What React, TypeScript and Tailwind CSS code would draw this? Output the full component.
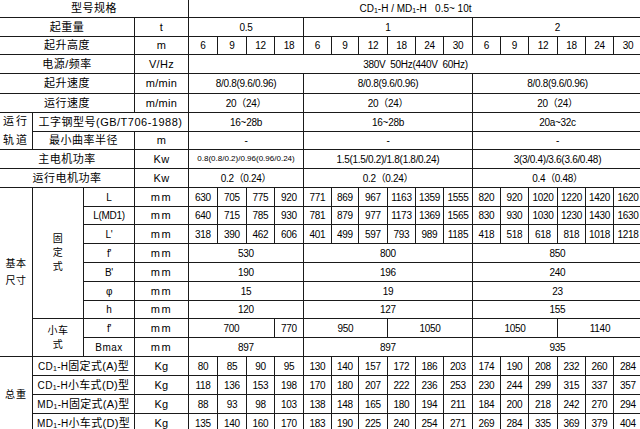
import React from "react";

type P = { className?: string; children?: React.ReactNode };

function Cell({ className = "", children }: P) {
  return (
    <div className={`flex items-center justify-center overflow-hidden whitespace-nowrap bg-white text-black ${className}`}>
      {children}
    </div>
  );
}

// chinese row label
function Label({ className = "", children }: P) {
  return <Cell className={`text-[11px] tracking-[0.5px] ${className}`}>{children}</Cell>;
}

function Unit({ children, wide }: P & { wide?: boolean }) {
  return (
    <Cell className={`text-[11px] ${wide ? "tracking-[1.5px]" : "tracking-[0.3px]"}`}>{children}</Cell>
  );
}

function Num({ className = "", children }: P) {
  return <Cell className={`text-[10px] tracking-[-0.3px] ${className}`}>{children}</Cell>;
}

function Three({ a, b, c, small }: { a: string; b: string; c: string; small?: string }) {
  return (
    <>
      <Num className={`col-span-4 ${small ?? ""}`}>{a}</Num>
      <Num className="col-span-6">{b}</Num>
      <Num className="col-span-6">{c}</Num>
    </>
  );
}

function Row16({ values }: { values: string[] }) {
  return (
    <>
      {values.map((v, i) => (
        <Num key={i}>{v}</Num>
      ))}
    </>
  );
}

const heights = ["6", "9", "12", "18", "6", "9", "12", "18", "24", "30", "6", "9", "12", "18", "24", "30"];
const lenL = ["630", "705", "775", "920", "771", "869", "967", "1163", "1359", "1555", "820", "920", "1020", "1220", "1420", "1620"];
const lenMD = ["640", "715", "785", "930", "781", "879", "977", "1173", "1369", "1565", "830", "930", "1030", "1230", "1430", "1630"];
const lenL2 = ["318", "390", "462", "606", "401", "499", "597", "793", "989", "1185", "418", "518", "618", "818", "1018", "1218"];

const weights = [
  { pre: "CD", name: "固定式(A)型", v: ["80", "85", "90", "95", "130", "140", "157", "172", "186", "203", "174", "190", "208", "232", "260", "284"] },
  { pre: "CD", name: "小车式(D)型", v: ["118", "136", "153", "198", "170", "180", "207", "222", "236", "253", "230", "244", "299", "315", "337", "357"] },
  { pre: "MD", name: "固定式(A)型", v: ["88", "93", "98", "103", "138", "148", "165", "180", "194", "211", "184", "200", "218", "242", "270", "294"] },
  { pre: "MD", name: "小车式(D)型", v: ["135", "140", "160", "170", "183", "190", "225", "240", "254", "271", "269", "284", "335", "369", "379", "404"] },
];

function Sub() {
  return <span className="relative top-[1px] text-[7px]">1</span>;
}

export default function App() {
  return (
    <div className="h-[429px] w-[640px] overflow-hidden bg-white font-['Liberation_Sans','Noto_Sans_CJK_SC',sans-serif]">
      <div className="grid w-[642px] grid-cols-[32px_50px_50px_53px_28px_28px_27px_28px_27px_26px_28px_27px_27px_28px_27px_27px_28px_27px_27px_28px] grid-rows-[17px_18px_17px_18px_19px_18px_18px_17px_18px_18px_18px_17px_18px_18px_18px_18px_17px_18px_18px_18px_18px_18px_18px] gap-px bg-[#1a1a1a]">
        {/* header */}
        <Label className="col-span-4">型号规格</Label>
        <Cell className="col-span-16 whitespace-pre text-[10px]">
          <span>
            CD<Sub />-H / MD<Sub />-H{"   "}0.5~ 10t
          </span>
        </Cell>

        <Label className="col-span-3">起重量</Label>
        <Unit>t</Unit>
        <Three a="0.5" b="1" c="2" />

        <Label className="col-span-3">起升高度</Label>
        <Unit>m</Unit>
        <Row16 values={heights} />

        <Label className="col-span-3">电源/频率</Label>
        <Unit>V/Hz</Unit>
        <Num className="col-span-16 whitespace-pre">380V  50Hz(440V  60Hz)</Num>

        <Label className="col-span-3">起升速度</Label>
        <Unit>m/min</Unit>
        <Three a="8/0.8(9.6/0.96)" b="8/0.8(9.6/0.96)" c="8/0.8(9.6/0.96)" />

        <Label className="col-span-3">运行速度</Label>
        <Unit>m/min</Unit>
        <Three a="20（24）" b="20（24）" c="20（24）" />

        {/* track */}
        <Label className="row-span-2 flex-col !tracking-[2px] leading-[19px]">
          <span>运行</span>
          <span>轨道</span>
        </Label>
        <Label className="col-span-3">工字钢型号(GB/T706-1988)</Label>
        <Three a="16~28b" b="16~28b" c="20a~32c" />

        <Label className="col-span-2">最小曲率半径</Label>
        <Unit>m</Unit>
        <Three a="-" b="-" c="-" />

        <Label className="col-span-3">主电机功率</Label>
        <Unit>Kw</Unit>
        <Three
          a="0.8(0.8/0.2)/0.96(0.96/0.24)"
          small="!text-[8px] !tracking-[0px]"
          b="1.5(1.5/0.2)/1.8(1.8/0.24)"
          c="3(3/0.4)/3.6(3.6/0.48)"
        />

        <Label className="col-span-3">运行电机功率</Label>
        <Unit>Kw</Unit>
        <Three a="0.2（0.24）" b="0.2（0.24）" c="0.4（0.48）" />

        {/* basic dimensions */}
        <Label className="row-span-9 flex-col !text-[10px] leading-[17px]">
          <span>基本</span>
          <span>尺寸</span>
        </Label>
        <Label className="row-span-7 flex-col !text-[10px] leading-[14px]">
          <span>固</span>
          <span>定</span>
          <span>式</span>
        </Label>
        <Num>L</Num>
        <Unit wide>mm</Unit>
        <Row16 values={lenL} />

        <Num>L(MD1)</Num>
        <Unit wide>mm</Unit>
        <Row16 values={lenMD} />

        <Num>L'</Num>
        <Unit wide>mm</Unit>
        <Row16 values={lenL2} />

        <Num>f'</Num>
        <Unit wide>mm</Unit>
        <Three a="530" b="800" c="850" />

        <Num>B'</Num>
        <Unit wide>mm</Unit>
        <Three a="190" b="196" c="240" />

        <Num>φ</Num>
        <Unit wide>mm</Unit>
        <Three a="15" b="19" c="23" />

        <Num>h</Num>
        <Unit wide>mm</Unit>
        <Three a="120" b="127" c="155" />

        <Label className="row-span-2 flex-col !text-[10px] leading-[14px]">
          <span>小车</span>
          <span>式</span>
        </Label>
        <Num>f'</Num>
        <Unit wide>mm</Unit>
        <Num className="col-span-3">700</Num>
        <Num>770</Num>
        <Num className="col-span-3">950</Num>
        <Num className="col-span-3">1050</Num>
        <Num className="col-span-3">1050</Num>
        <Num className="col-span-3">1140</Num>

        <Num className="tracking-[0.5px]">Bmax</Num>
        <Unit wide>mm</Unit>
        <Three a="897" b="897" c="935" />

        {/* total weight */}
        <Label className="row-span-4 !text-[10px] !tracking-[1px]">总重</Label>
        {weights.map((w, i) => (
          <React.Fragment key={i}>
            <Label className="col-span-2 !tracking-[0.3px]">
              <span className="text-[10px]">
                {w.pre}
                <Sub />-H
              </span>
              {w.name}
            </Label>
            <Unit>Kg</Unit>
            <Row16 values={w.v} />
          </React.Fragment>
        ))}
      </div>
    </div>
  );
}
